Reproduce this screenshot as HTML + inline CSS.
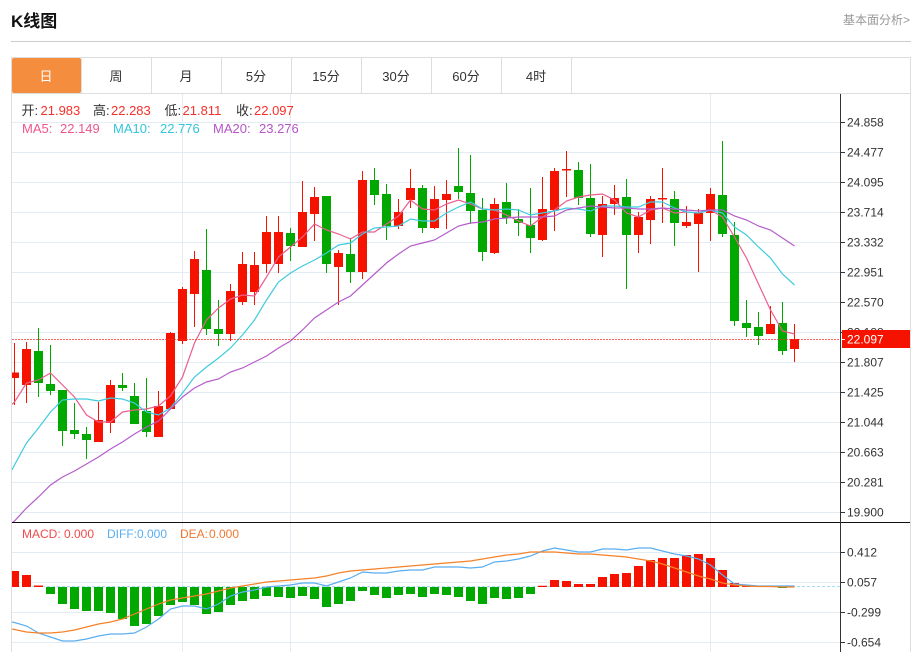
<!DOCTYPE html>
<html><head><meta charset="utf-8"><style>
html,body{margin:0;padding:0;background:#fff;width:920px;height:652px;overflow:hidden}
svg{display:block;font-family:"Liberation Sans","Noto Sans CJK SC",sans-serif}
</style></head><body>
<svg width="920" height="652" viewBox="0 0 920 652" xmlns="http://www.w3.org/2000/svg">
<defs><clipPath id="c"><rect x="12" y="94" width="828" height="428"/></clipPath><clipPath id="m"><rect x="12" y="523" width="828" height="129"/></clipPath></defs>
<text x="11" y="27" font-size="17" font-weight="bold" fill="#111">K线图</text>
<text x="843" y="24" font-size="12" fill="#999">基本面分析&gt;</text>
<rect x="11" y="41" width="900" height="1" fill="#ccc"/>
<path d="M11.5 652V57.5H910.5V652M11 93.5H911M81.5 58V93M151.5 58V93M221.5 58V93M291.5 58V93M361.5 58V93M431.5 58V93M501.5 58V93M571.5 58V93" fill="none" stroke="#ddd"/>
<rect x="12" y="58" width="69" height="35" rx="2" fill="#f58d3f"/>
<g font-size="13" fill="#333" text-anchor="middle">
<text x="46" y="81" fill="#fff">日</text><text x="116" y="81">周</text><text x="186" y="81">月</text><text x="256" y="81">5分</text><text x="326" y="81">15分</text><text x="396" y="81">30分</text><text x="466" y="81">60分</text><text x="536" y="81">4时</text>
</g>
<path d="M12 122.5H840M12 152.5H840M12 182.5H840M12 212.5H840M12 242.5H840M12 272.5H840M12 302.5H840M12 332.5H840M12 362.5H840M12 392.5H840M12 422.5H840M12 452.5H840M12 482.5H840M12 512.5H840M12 552.5H840M12 582.5H840M12 612.5H840M12 642.5H840M182.5 94V652M290.5 94V652M710.5 94V652" stroke="#e3ecf3" fill="none"/>
<g font-size="13">
<text x="21.5" y="115" fill="#333">开:</text><text x="40.5" y="115" fill="#f5302a">21.983</text>
<text x="93" y="115" fill="#333">高:</text><text x="111" y="115" fill="#f5302a">22.283</text>
<text x="164.5" y="115" fill="#333">低:</text><text x="182.5" y="115" fill="#f5302a">21.811</text>
<text x="236" y="115" fill="#333">收:</text><text x="254" y="115" fill="#f5302a">22.097</text>
<g fill="#f0558c"><text x="22" y="133">MA5:</text><text x="60" y="133">22.149</text></g>
<g fill="#33c5da"><text x="113" y="133">MA10:</text><text x="160" y="133">22.776</text></g>
<g fill="#b655c8"><text x="213" y="133">MA20:</text><text x="259" y="133">23.276</text></g>
</g>
<g clip-path="url(#c)" fill="none">
<path stroke="#f51300" d="M14.5 343V405M26.5 342V403M98.5 402V442M110.5 380V433M158.5 391V437M170.5 332V409M182.5 287V344M194.5 251V327M230.5 284V341M242.5 252V305M254.5 252V305M266.5 216V273M278.5 216V273M302.5 181V247M314.5 187V241M338.5 250V305M362.5 171V279M398.5 199V229M410.5 169V208M434.5 186V229M446.5 180V229M494.5 198V254M542.5 177V241M554.5 168V231M566.5 151V197M602.5 196V257M614.5 185V215M638.5 212V253M650.5 196V244M662.5 168V223M686.5 206V228M698.5 209V272M710.5 188V241M770.5 306V334M794.5 324V362"/>
<path stroke="#00a800" d="M38.5 328V397M50.5 345V395M62.5 390V446M74.5 403V439M86.5 427V459M122.5 373V391M134.5 383V424M146.5 378V437M206.5 229V335M218.5 300V346M290.5 228V261M326.5 196V273M350.5 238V283M374.5 168V205M386.5 184V240M422.5 185V233M458.5 148V199M470.5 155V224M482.5 198V261M506.5 183V224M518.5 209V236M530.5 188V253M578.5 162V205M590.5 164V237M626.5 179V289M674.5 191V246M722.5 141V237M734.5 222V326M746.5 300V337M758.5 312V345M782.5 302V355"/>
<path stroke="#f51300" stroke-width="9" d="M14.5 372.5V378M26.5 349V385M98.5 420V442M110.5 385V423M158.5 406V437M170.5 333V409M182.5 289V341M194.5 259V294M230.5 291V334M242.5 264V302M254.5 265V292M266.5 232V264M278.5 232V264M302.5 212V247M314.5 197V214M338.5 253V267M362.5 180V272M398.5 212V226M410.5 188V200M434.5 199V228M446.5 194V200M494.5 204V253M542.5 209V240M554.5 171V210M566.5 169V170.5M602.5 204V235M614.5 198V204M638.5 217V235M650.5 199V220M662.5 198V199.5M686.5 222V226M698.5 213V224M710.5 194V213M770.5 324V334M794.5 339V349"/>
<path stroke="#00a800" stroke-width="9" d="M38.5 351V383M50.5 384V391M62.5 390V431M74.5 430V434M86.5 434V440M122.5 385V388M134.5 396V424M146.5 411V432M206.5 270V329M218.5 329V334M290.5 233V246M326.5 196V264M350.5 254V272M374.5 180V195M386.5 194V226M422.5 188V228M458.5 186V192M470.5 193V211M482.5 210V252M506.5 202V218M518.5 219V223M530.5 225V238M578.5 170V198M590.5 198V234M626.5 197V235M674.5 199V223M722.5 195V234M734.5 235V321M746.5 323V328M758.5 327V336M782.5 323V351"/>
<path stroke="#ec5d8f" stroke-width="1.2" d="M12 404.5L14.5 402 26.5 383 38.5 380 50.5 373 62.5 385 74.5 397 86.5 415 98.5 422 110.5 422 122.5 412 134.5 410 146.5 409 158.5 406 170.5 396 182.5 377 194.5 343 206.5 320 218.5 308 230.5 299 242.5 295 254.5 296 266.5 277 278.5 257 290.5 247 302.5 237 314.5 224 326.5 230 338.5 234 350.5 239 362.5 232 374.5 232 386.5 224 398.5 216 410.5 200 422.5 209 434.5 210 446.5 204 458.5 200 470.5 204 482.5 209 494.5 210 506.5 215 518.5 221 530.5 226 542.5 217 554.5 210 566.5 201 578.5 197 590.5 195 602.5 194 614.5 200 626.5 213 638.5 217 650.5 210 662.5 208 674.5 213 686.5 212 698.5 213 710.5 210 722.5 217 734.5 237 746.5 258 758.5 284 770.5 310 782.5 331 794.5 334"/>
<path stroke="#3fcbde" stroke-width="1.2" d="M12 470L14.5 465 26.5 443 38.5 428 50.5 412 62.5 400 74.5 399 86.5 399 98.5 401 110.5 398 122.5 399 134.5 403 146.5 412 158.5 415 170.5 408 182.5 393 194.5 377 206.5 367 218.5 358 230.5 348 242.5 335 254.5 320 266.5 300 278.5 282 290.5 273 302.5 266 314.5 260 326.5 253 338.5 245 350.5 243 362.5 234 374.5 228 386.5 227 398.5 226 410.5 219 422.5 221 434.5 221 446.5 213 458.5 207 470.5 202 482.5 209 494.5 210 506.5 209 518.5 210 530.5 215 542.5 213 554.5 211 566.5 208 578.5 209 590.5 211 602.5 206 614.5 206 626.5 207 638.5 207 650.5 202 662.5 202 674.5 208 686.5 212 698.5 213 710.5 210 722.5 213 734.5 227 746.5 235 758.5 247 770.5 258 782.5 274 794.5 285"/>
<path stroke="#b55ccb" stroke-width="1.2" d="M12 523L14.5 521 26.5 508 38.5 497 50.5 485 62.5 477 74.5 471 86.5 464 98.5 457 110.5 449 122.5 442 134.5 434 146.5 427 158.5 421 170.5 409 182.5 397 194.5 388 206.5 382 218.5 379 230.5 372 242.5 368 254.5 362 266.5 356 278.5 348 290.5 341 302.5 330 314.5 318 326.5 310 338.5 302 350.5 296 362.5 285 374.5 274 386.5 263 398.5 254 410.5 246 422.5 243 434.5 240 446.5 233 458.5 226 470.5 223 482.5 222 494.5 219 506.5 218 518.5 217 530.5 217 542.5 217 554.5 216 566.5 210 578.5 208 590.5 206 602.5 207 614.5 208 626.5 208 638.5 209 650.5 209 662.5 208 674.5 209 686.5 210 698.5 211 710.5 210 722.5 210 734.5 216 746.5 220 758.5 226 770.5 230 782.5 238 794.5 246"/>
</g>
<path d="M12 339.5H840" stroke="#f5302a" stroke-opacity=".75" stroke-dasharray="2 1" fill="none"/>
<g clip-path="url(#m)" fill="none">
<path d="M12 586.5H840" stroke="#a5def3" stroke-dasharray="3 2"/>
<path stroke="#f51300" stroke-width="9" d="M14.5 571V587M26.5 575V587M38.5 585.5V587M542.5 585.7V587M554.5 580V587M566.5 581V587M578.5 584V587M590.5 584V587M602.5 577V587M614.5 574V587M626.5 573V587M638.5 566V587M650.5 560V587M662.5 558V587M674.5 558V587M686.5 555V587M698.5 554V587M710.5 558V587M722.5 570V587M734.5 583V587M746.5 585V587M758.5 585.5V587M770.5 585.5V587"/>
<path stroke="#00a800" stroke-width="9" d="M50.5 587V594M62.5 587V604M74.5 587V609M86.5 587V611M98.5 587V611M110.5 587V613M122.5 587V619M134.5 587V626M146.5 587V624M158.5 587V616M170.5 587V605M182.5 587V602M194.5 587V605M206.5 587V614M218.5 587V612M230.5 587V605M242.5 587V601M254.5 587V599M266.5 587V596M278.5 587V597M290.5 587V598M302.5 587V596M314.5 587V599M326.5 587V607M338.5 587V604M350.5 587V601M362.5 587V591M374.5 587V595M386.5 587V598M398.5 587V595M410.5 587V594M422.5 587V597M434.5 587V594M446.5 587V595M458.5 587V597M470.5 587V601M482.5 587V604M494.5 587V598M506.5 587V599M518.5 587V598M530.5 587V594M782.5 587V588"/>
<path stroke="#5aaef0" stroke-width="1.2" d="M12 622L14.5 622.5 26.5 626 38.5 633 50.5 637 62.5 641 74.5 641 86.5 639 98.5 636 110.5 634 122.5 634 134.5 633 146.5 627 158.5 619 170.5 609 182.5 606 194.5 606 206.5 609 218.5 604 230.5 596 242.5 592 254.5 590 266.5 587 278.5 586 290.5 585 302.5 583 314.5 583 326.5 586 338.5 582 350.5 578 362.5 572 374.5 573 386.5 573 398.5 571 410.5 570 422.5 570 434.5 567 446.5 567 458.5 567 470.5 568 482.5 567 494.5 562 506.5 561 518.5 559 530.5 556 542.5 551 554.5 548 566.5 550 578.5 552 590.5 552 602.5 549 614.5 549 626.5 550 638.5 548 650.5 548 662.5 551 674.5 554 686.5 556 698.5 559 710.5 565 722.5 575 734.5 584 746.5 585 758.5 586 770.5 586 782.5 586 794.5 586"/>
<path stroke="#f5822a" stroke-width="1.2" d="M12 629L14.5 629.5 26.5 632 38.5 633 50.5 633 62.5 632 74.5 630 86.5 627 98.5 624 110.5 622 122.5 619 134.5 614 146.5 609 158.5 604 170.5 600 182.5 598 194.5 596 206.5 594 218.5 591 230.5 588 242.5 586 254.5 584 266.5 582 278.5 581 290.5 580 302.5 579 314.5 578 326.5 576 338.5 573 350.5 571 362.5 570 374.5 569 386.5 568 398.5 567 410.5 566 422.5 565 434.5 564 446.5 563 458.5 562 470.5 561 482.5 559 494.5 557 506.5 555 518.5 554 530.5 552 542.5 552 554.5 552 566.5 553 578.5 554 590.5 554 602.5 555 614.5 556 626.5 557 638.5 559 650.5 561 662.5 564 674.5 568 686.5 572 698.5 576 710.5 579 722.5 583 734.5 585 746.5 586 758.5 586.5 770.5 586.5 782.5 587 794.5 587"/>
</g>
<rect x="12" y="522" width="898" height="1" fill="#111"/>
<g font-size="12">
<text x="22" y="538" fill="#f04a4a">MACD:</text><text x="64" y="538" fill="#f04a4a">0.000</text>
<text x="107" y="538" fill="#5aaef0">DIFF:</text><text x="137" y="538" fill="#5aaef0">0.000</text>
<text x="180" y="538" fill="#f0782d">DEA:</text><text x="209" y="538" fill="#f0782d">0.000</text>
</g>
<rect x="840" y="94" width="1" height="558" fill="#333"/>
<path d="M841 122.5h4M841 152.5h4M841 182.5h4M841 212.5h4M841 242.5h4M841 272.5h4M841 302.5h4M841 332.5h4M841 362.5h4M841 392.5h4M841 422.5h4M841 452.5h4M841 482.5h4M841 512.5h4M841 552.5h4M841 582.5h4M841 612.5h4M841 642.5h4" stroke="#333"/>
<g font-size="12" fill="#333">
<text x="847" y="126.500">24.858</text><text x="847" y="156.500">24.477</text><text x="847" y="186.500">24.095</text><text x="847" y="216.500">23.714</text><text x="847" y="246.500">23.332</text><text x="847" y="276.500">22.951</text><text x="847" y="306.500">22.570</text><text x="847" y="336.500">22.188</text><text x="847" y="366.500">21.807</text><text x="847" y="396.500">21.425</text><text x="847" y="426.500">21.044</text><text x="847" y="456.500">20.663</text><text x="847" y="486.500">20.281</text><text x="847" y="516.500">19.900</text>
<text x="847" y="556.500">0.412</text><text x="847" y="586.500">0.057</text><text x="847" y="616.500">-0.299</text><text x="847" y="646.500">-0.654</text>
</g>
<rect x="842" y="330" width="68" height="18" fill="#f51300"/>
<path d="M841 339.500h4" stroke="#fff"/>
<text x="847" y="343.500" font-size="12" fill="#fff">22.097</text>
</svg>
</body></html>
